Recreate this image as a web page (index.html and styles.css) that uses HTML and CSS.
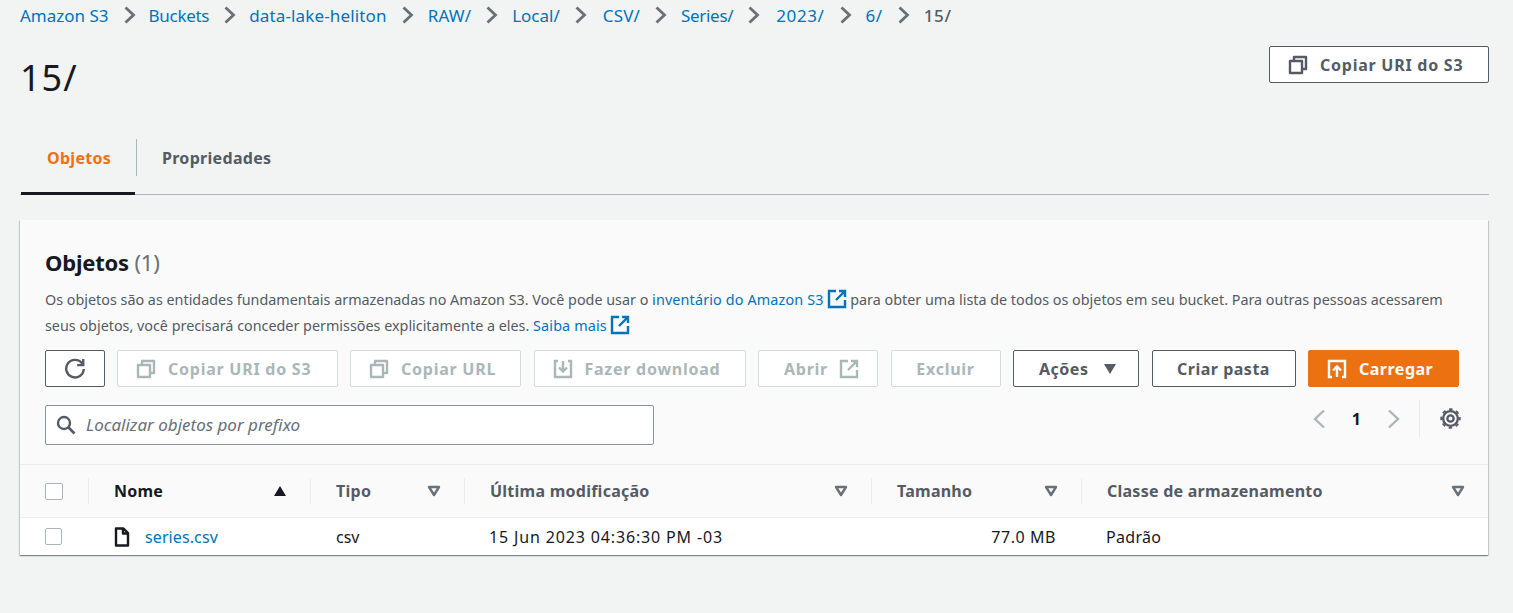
FILE: index.html
```html
<!DOCTYPE html>
<html lang="en">
<head>
  <meta charset="UTF-8">
  <title>15/ - Amazon S3</title>
  <link rel="stylesheet" href="styles.css">
</head>
<body>

  <!-- Icons -->
  <svg class="sprites" width="0" height="0">
    <symbol id="i-copy" viewBox="0 0 20 20"><path d="M6 6V2h12v12h-4M2 6h12v12H2z" fill="none" stroke="currentColor" stroke-width="2.400" stroke-linejoin="round"/></symbol>
    <symbol id="i-ext" viewBox="0 0 20 20"><path d="M9 2H2v16h16v-7M12 2h6v6M18 2l-9 9" fill="none" stroke="currentColor" stroke-width="2.400"/></symbol>
    <symbol id="i-down" viewBox="0 0 20 20"><path d="M5 2H2v16h16V2h-3M10 2v10M6 8.500l4 4 4-4" fill="none" stroke="currentColor" stroke-width="2.400"/></symbol>
    <symbol id="i-up" viewBox="0 0 20 20"><path d="M5 18H2V2h16v16h-3M10 18V8M6 11.500l4-4 4 4" fill="none" stroke="currentColor" stroke-width="2.400"/></symbol>
    <symbol id="i-sort" viewBox="0 0 14 12"><path d="M2 2h10l-5 8z" fill="none" stroke="currentColor" stroke-width="2.400" stroke-linejoin="round"/></symbol>
    <symbol id="i-crumb" viewBox="0 0 12 18"><path d="M1.500 1.500l8 7.500-8 7.500" fill="none" stroke="currentColor" stroke-width="2.800"/></symbol>
  </svg>

  <!-- Breadcrumbs -->
  <nav class="crumbs">
    <a href="#">Amazon S3</a><svg class="sep short"><use href="#i-crumb"/></svg>
    <a class="tight" href="#">Buckets</a><svg class="sep short"><use href="#i-crumb"/></svg>
    <a class="wide" href="#">data-lake-heliton</a><svg class="sep"><use href="#i-crumb"/></svg>
    <a class="wide" href="#">RAW/</a><svg class="sep"><use href="#i-crumb"/></svg>
    <a href="#">Local/</a><svg class="sep long"><use href="#i-crumb"/></svg>
    <a class="wide" href="#">CSV/</a><svg class="sep"><use href="#i-crumb"/></svg>
    <a class="tight" href="#">Series/</a><svg class="sep long"><use href="#i-crumb"/></svg>
    <a class="wider" href="#">2023/</a><svg class="sep"><use href="#i-crumb"/></svg>
    <a class="wider" href="#">6/</a><svg class="sep"><use href="#i-crumb"/></svg>
    <span class="current wider">15/</span>
  </nav>

  <!-- Header -->
  <header class="page-head">
    <h1>15/</h1>
    <button class="btn lead top-copy"><svg class="ico"><use href="#i-copy"/></svg>Copiar URI do S3</button>
  </header>

  <!-- Tabs -->
  <div class="tabs">
    <a class="tab active" href="#">Objetos</a>
    <a class="tab" href="#">Propriedades</a>
  </div>

  <!-- Objects card -->
  <section class="card">
    <div class="card-head">
      <h2>Objetos <span class="count">(1)</span></h2>
      <p class="desc">Os objetos são as entidades fundamentais armazenadas no Amazon S3. Você pode usar o <a href="#">inventário do Amazon S3<svg class="ext"><use href="#i-ext"/></svg></a> para obter uma lista de todos os objetos em seu bucket. Para outras pessoas acessarem seus objetos, você precisará conceder permissões explicitamente a eles. <a href="#">Saiba mais<svg class="ext"><use href="#i-ext"/></svg></a></p>

      <div class="toolbar">
        <button class="btn refresh"><svg class="ico" viewBox="0 0 20 20"><path d="M16.500 5A8 8 0 1 0 18 10" fill="none" stroke="currentColor" stroke-width="2.200"/><path d="M17.500 1v5.500H12" fill="none" stroke="currentColor" stroke-width="2.200"/></svg></button>
        <button class="btn lead off w-uri"><svg class="ico"><use href="#i-copy"/></svg>Copiar URI do S3</button>
        <button class="btn lead off w-url"><svg class="ico"><use href="#i-copy"/></svg>Copiar URL</button>
        <button class="btn lead off w-down"><svg class="ico"><use href="#i-down"/></svg>Fazer download</button>
        <button class="btn text off w-open">Abrir<svg class="ico after"><use href="#i-ext"/></svg></button>
        <button class="btn off w-del">Excluir</button>
        <button class="btn text w-act">Ações<svg class="caret" viewBox="0 0 14 12"><path d="M1 1h12L7 11z"/></svg></button>
        <button class="btn w-new">Criar pasta</button>
        <button class="btn lead primary w-up"><svg class="ico"><use href="#i-up"/></svg>Carregar</button>
      </div>

      <div class="filter-row">
        <div class="search">
          <svg class="ico" viewBox="0 0 20 20"><circle cx="8" cy="8" r="6" fill="none" stroke="currentColor" stroke-width="2.400"/><path d="M12.500 12.500l6 6" stroke="currentColor" stroke-width="2.600"/></svg>
          <span>Localizar objetos por prefixo</span>
        </div>
        <div class="pager">
          <svg class="chev" viewBox="0 0 14 20"><path d="M12 1.500L3 10l9 8.500"/></svg>
          <b>1</b>
          <svg class="chev" viewBox="0 0 14 20"><path d="M2 1.500L11 10l-9 8.500"/></svg>
          <i class="divider"></i>
          <svg class="gear" viewBox="0 0 20 20"><circle cx="10" cy="10" r="7" fill="none" stroke="currentColor" stroke-width="2.200"/><circle cx="10" cy="10" r="8.800" fill="none" stroke="currentColor" stroke-width="1.800" stroke-dasharray="3.400 3.510" stroke-dashoffset="1.700"/><circle cx="10" cy="10" r="3" fill="none" stroke="currentColor" stroke-width="2.200"/></svg>
        </div>
      </div>
    </div>

    <table class="objects">
      <colgroup>
        <col class="c-check"><col class="c-name"><col class="c-type"><col class="c-date"><col class="c-size"><col class="c-class">
      </colgroup>
      <thead>
        <tr>
          <th class="check"><span class="box big"></span></th>
          <th><div class="th-in sorted">Nome<svg class="sorted-ico" viewBox="0 0 14 12"><path d="M7 1l6 10H1z"/></svg></div></th>
          <th><div class="th-in">Tipo<svg class="sort"><use href="#i-sort"/></svg></div></th>
          <th><div class="th-in">Última modificação<svg class="sort"><use href="#i-sort"/></svg></div></th>
          <th><div class="th-in">Tamanho<svg class="sort"><use href="#i-sort"/></svg></div></th>
          <th><div class="th-in">Classe de armazenamento<svg class="sort"><use href="#i-sort"/></svg></div></th>
        </tr>
      </thead>
      <tbody>
        <tr>
          <td class="check"><span class="box"></span></td>
          <td><a class="file" href="#"><svg class="file-ico" viewBox="0 0 16 20"><path d="M2 1.500h7.500l4.500 4.500v12.500H2zM9 1.500v5h5" fill="none" stroke="currentColor" stroke-width="2.400" stroke-linejoin="round"/></svg>series.csv</a></td>
          <td class="type">csv</td>
          <td class="date">15 Jun 2023 04:36:30 PM -03</td>
          <td class="num">77.0 MB</td>
          <td class="storage">Padrão</td>
        </tr>
      </tbody>
    </table>
  </section>

</body>
</html>
```
FILE: styles.css
```css
body {
  margin: 0;
  padding: 0 24px 0 20px;
  height: 613px;
  box-sizing: border-box;
  overflow: hidden;
  font-family: "Noto Sans", sans-serif;
  font-size: 16px;
  background-color: #f2f3f3;
  color: #16191f;
}
a {
  color: #0073bb;
  text-decoration: none;
}
.sprites {
  position: absolute;
}

/* Breadcrumbs */
.crumbs {
  display: flex;
  align-items: center;
  height: 30px;
  font-size: 17px;
  white-space: nowrap;
}
.crumbs .current {
  color: #545b64;
  font-weight: 500;
}
.crumbs .tight { letter-spacing: -0.3px; }
.crumbs .wide { letter-spacing: 0.15px; }
.crumbs .wider { letter-spacing: 0.6px; }
.sep {
  width: 12px;
  height: 18px;
  margin: 0 14px 0 15px;
  color: #687078;
}
.sep.short { margin-right: 13px; }
.sep.long { margin-right: 16px; }

/* Header */
.page-head {
  display: flex;
  justify-content: space-between;
  align-items: flex-start;
  height: 109px;
}
h1 {
  margin: 21px 0 0;
  font-size: 36px;
  line-height: 54px;
  font-weight: 400;
  letter-spacing: 1px;
}

/* Buttons */
.btn {
  display: inline-flex;
  align-items: center;
  justify-content: center;
  height: 37px;
  padding: 0;
  box-sizing: border-box;
  font-family: inherit;
  font-size: 16px;
  font-weight: 700;
  letter-spacing: 0.5px;
  color: #545b64;
  background-color: #fff;
  border: 1px solid #545b64;
  border-radius: 2px;
}
.lead {
  justify-content: flex-start;
  padding-left: 18px;
}
.text {
  justify-content: flex-start;
  padding-left: 25px;
}
.top-copy {
  width: 220px;
  margin-top: 16px;
  letter-spacing: 0.75px;
}
.ico {
  width: 20px;
  height: 20px;
  margin-right: 12px;
  flex: none;
}
.ico.after {
  margin: 0 0 0 11px;
}
.off {
  color: #aab7b8;
  border-color: #d5dbdb;
  background-color: #fff;
  letter-spacing: 0.75px;
}
.primary {
  color: #fff;
  background-color: #ec7211;
  border-color: #ec7211;
}
.refresh { width: 59.500px; }
.refresh .ico { margin: 0; width: 22px; height: 22px; }
.w-uri { width: 220.500px; }
.w-url { width: 171px; }
.w-down { width: 212px; }
.w-open { width: 120px; }
.w-del { width: 110px; }
.w-act { width: 126px; }
.w-new { width: 144px; }
.w-up { width: 151px; }
.caret {
  width: 14px;
  height: 12px;
  margin-left: 15px;
  fill: #545b64;
}

/* Tabs */
.tabs {
  display: flex;
  height: 55px;
  border-bottom: 1px solid #aab7b8;
}
.tab {
  position: relative;
  display: flex;
  align-items: center;
  height: 37px;
  box-sizing: border-box;
  padding: 0 26px;
  font-weight: 700;
  letter-spacing: 0.3px;
  color: #545b64;
}
.tab.active {
  color: #ec7211;
  width: 114px;
  height: 56px;
  margin-left: 1px;
  padding: 0 0 16px 26px;
  border-bottom: 3px solid #16191f;
}
.tab + .tab {
  margin-left: 1px;
}
.tab + .tab::before {
  content: "";
  position: absolute;
  left: 0;
  top: 0;
  height: 37px;
  border-left: 1px solid #aab7b8;
}

/* Card */
.card {
  margin-top: 25px;
  margin-right: 1px;
  background-color: #fff;
  box-shadow: 0 1px 1px 0 rgba(0,28,36,0.3), 1px 1px 1px 0 rgba(0,28,36,0.15), -1px 1px 1px 0 rgba(0,28,36,0.15);
}
.card-head {
  background-color: #fafafa;
  padding: 24px 29px 19px 25px;
  border-bottom: 1px solid #eaeded;
}
h2 {
  margin: 0;
  font-size: 22px;
  line-height: 36px;
  font-weight: 700;
  letter-spacing: -0.2px;
}
.count {
  font-weight: 400;
  color: #687078;
}
.desc {
  margin: 7px 0 0;
  font-size: 14.350px;
  line-height: 26px;
  color: #545b64;
}
.desc a {
  letter-spacing: 0.15px;
}
.ext {
  width: 20px;
  height: 20px;
  margin-left: 3px;
  vertical-align: -4px;
}
.toolbar {
  display: flex;
  gap: 12.500px;
  margin-top: 11px;
}
.filter-row {
  display: flex;
  justify-content: space-between;
  align-items: flex-start;
  margin-top: 18px;
}
.search {
  display: flex;
  align-items: center;
  width: 609px;
  height: 40px;
  box-sizing: border-box;
  padding-left: 10px;
  background-color: #fff;
  border: 1px solid #879596;
  border-radius: 2px;
  color: #545b64;
}
.search .ico {
  width: 20px;
  height: 20px;
  margin-right: 10px;
}
.search span {
  margin-bottom: 2px;
  font-size: 17px;
  font-style: italic;
  color: #687078;
}
.pager {
  display: flex;
  align-items: center;
  height: 37px;
  margin-top: -5px;
  margin-right: -2px;
}
.chev {
  width: 14px;
  height: 20px;
  fill: none;
  stroke: #aab7b8;
  stroke-width: 2.400;
}
.pager b {
  margin: 0 26px;
  font-size: 16px;
}
.divider {
  width: 1px;
  height: 37px;
  margin: 0 20px 0 18px;
  background-color: #eaeded;
}
.gear {
  width: 21px;
  height: 21px;
  color: #545b64;
}

/* Table */
.objects {
  width: 100%;
  table-layout: fixed;
  border-collapse: collapse;
}
.c-check { width: 68px; }
.c-name { width: 222px; }
.c-type { width: 154px; }
.c-date { width: 407px; }
.c-size { width: 210px; }
.objects th {
  height: 52px;
  padding: 0;
  background-color: #fafafa;
  border-bottom: 1px solid #eaeded;
  text-align: left;
  font-weight: 700;
  letter-spacing: 0.25px;
  color: #545b64;
}
.th-in {
  display: flex;
  align-items: center;
  justify-content: space-between;
  height: 26px;
  padding: 0 23px 0 25px;
  border-left: 1px solid #eaeded;
}
.th-in.sorted {
  color: #16191f;
}
.sort {
  width: 14px;
  height: 12px;
  color: #687078;
}
.sorted-ico {
  width: 14px;
  height: 12px;
  fill: #16191f;
}
.objects td {
  height: 37px;
  padding: 0 0 0 25px;
}
.objects td.check,
.objects th.check {
  padding-left: 25px;
}
.box {
  display: block;
  width: 17px;
  height: 17px;
  box-sizing: border-box;
  background-color: #fff;
  border: 1px solid #aab7b8;
  border-radius: 2px;
}
.box.big {
  width: 18px;
}
.file {
  display: flex;
  align-items: center;
  letter-spacing: 0.1px;
}
.file-ico {
  width: 16px;
  height: 20px;
  margin-right: 15px;
  margin-left: 1px;
  color: #16191f;
}
.objects td.type {
  padding-left: 26px;
}
.objects td.date {
  letter-spacing: 0.85px;
}
.objects td.num {
  text-align: right;
  padding-right: 25px;
  letter-spacing: 0.55px;
}
.objects td.storage {
  letter-spacing: 0.3px;
}
```
